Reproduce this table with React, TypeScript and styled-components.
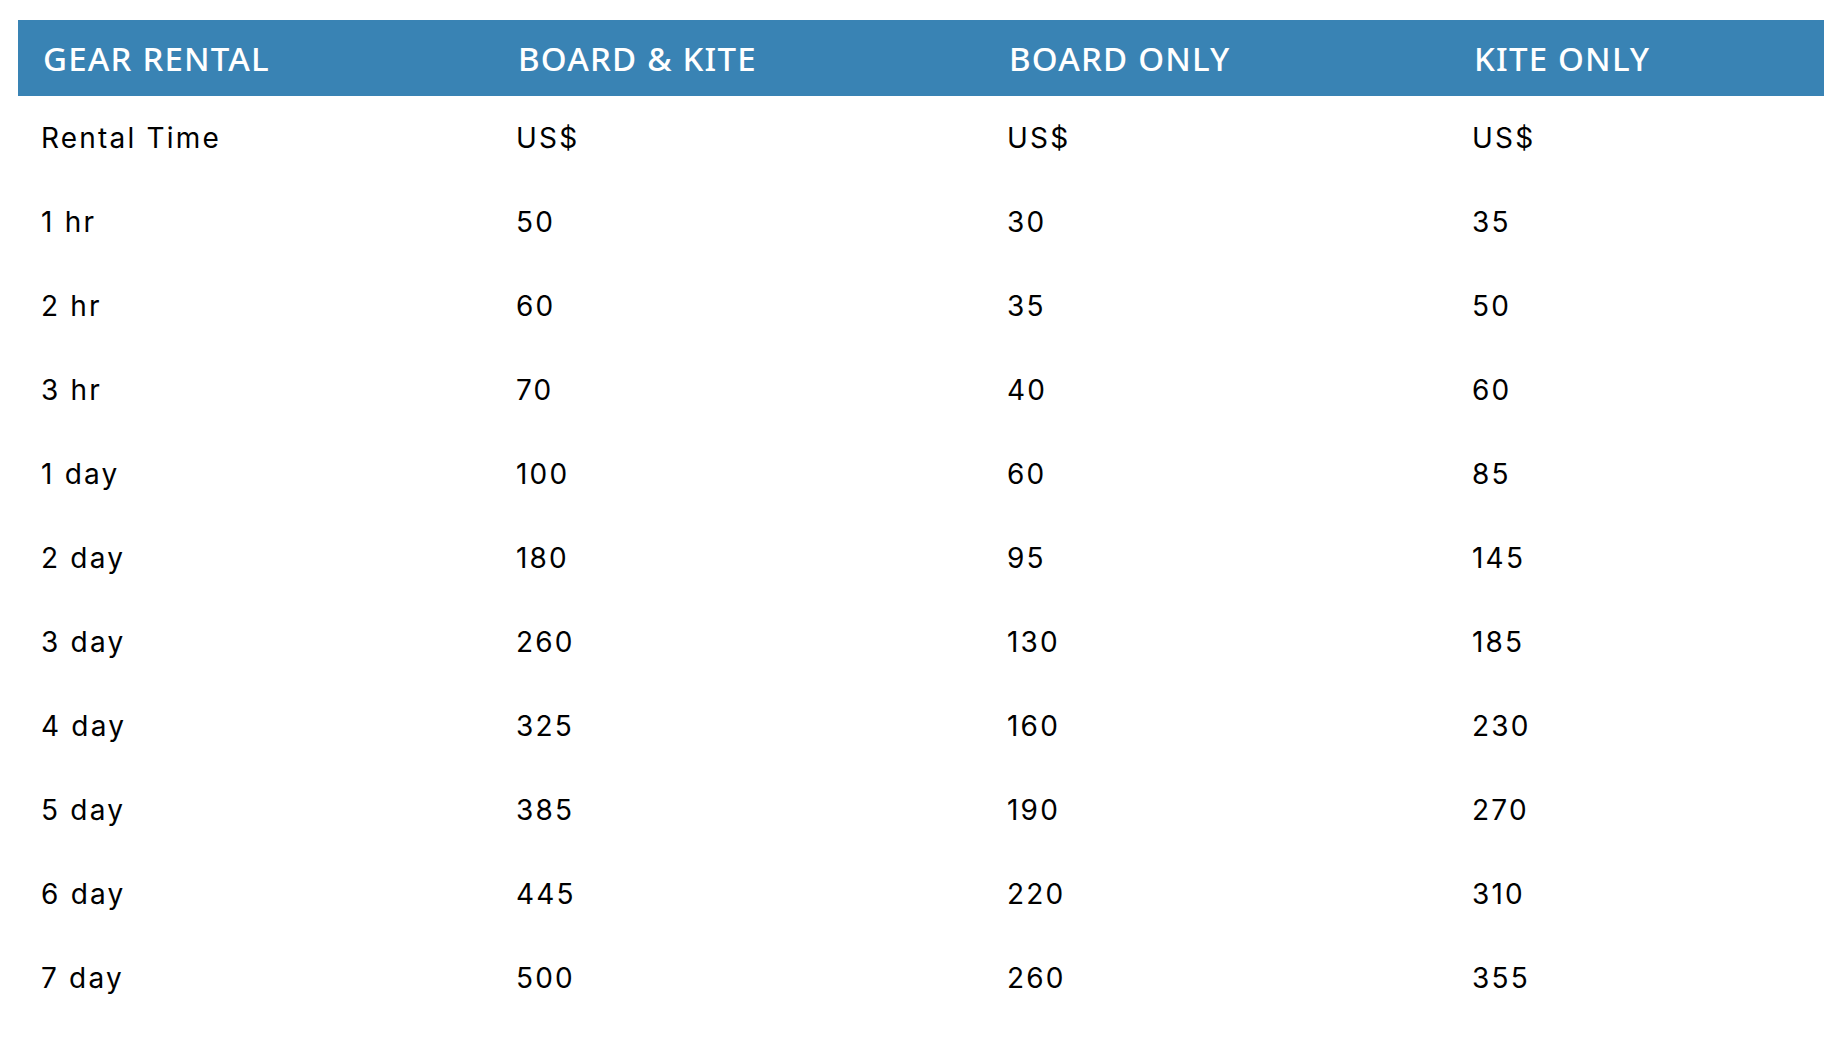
import React from "react";
import styled, { createGlobalStyle } from "styled-components";

const Global = createGlobalStyle`
  html, body { margin: 0; padding: 0; background: #ffffff; }
  body { font-family: "Inter", "Noto Sans", "Liberation Sans", sans-serif; color: #000; }
`;

const Page = styled.div`
  padding: 20px 18px 0 18px;
`;

const Table = styled.div`
  width: 1806px;
  display: grid;
  grid-template-columns: 475px 491px 465px 1fr;
`;

const HeadCell = styled.div`
  background: #3983b4;
  color: #ffffff;
  height: 76px;
  display: flex;
  align-items: center;
  padding-left: 25px;
  font-family: "Noto Sans", "Liberation Sans", sans-serif;
  font-size: 33px;
  font-weight: 500;
  letter-spacing: 1.2px;
  text-transform: uppercase;
`;

const Cell = styled.div`
  height: 84px;
  display: flex;
  align-items: center;
  padding-left: 23px;
  font-size: 28px;
  font-weight: 400;
  letter-spacing: 2.2px;
  word-spacing: 0;
`;

const headers = ["GEAR RENTAL", "BOARD & KITE", "BOARD ONLY", "KITE ONLY"];
const rows: string[][] = [
  ["Rental Time", "US$", "US$", "US$"],
  ["1 hr", "50", "30", "35"],
  ["2 hr", "60", "35", "50"],
  ["3 hr", "70", "40", "60"],
  ["1 day", "100", "60", "85"],
  ["2 day", "180", "95", "145"],
  ["3 day", "260", "130", "185"],
  ["4 day", "325", "160", "230"],
  ["5 day", "385", "190", "270"],
  ["6 day", "445", "220", "310"],
  ["7 day", "500", "260", "355"],
];

export default function App() {
  return (
    <>
      <Global />
      <Page>
        <Table>
          {headers.map((h) => (
            <HeadCell key={h}>{h}</HeadCell>
          ))}
          {rows.map((r, i) =>
            r.map((c, j) => <Cell key={`${i}-${j}`}>{c}</Cell>)
          )}
        </Table>
      </Page>
    </>
  );
}
